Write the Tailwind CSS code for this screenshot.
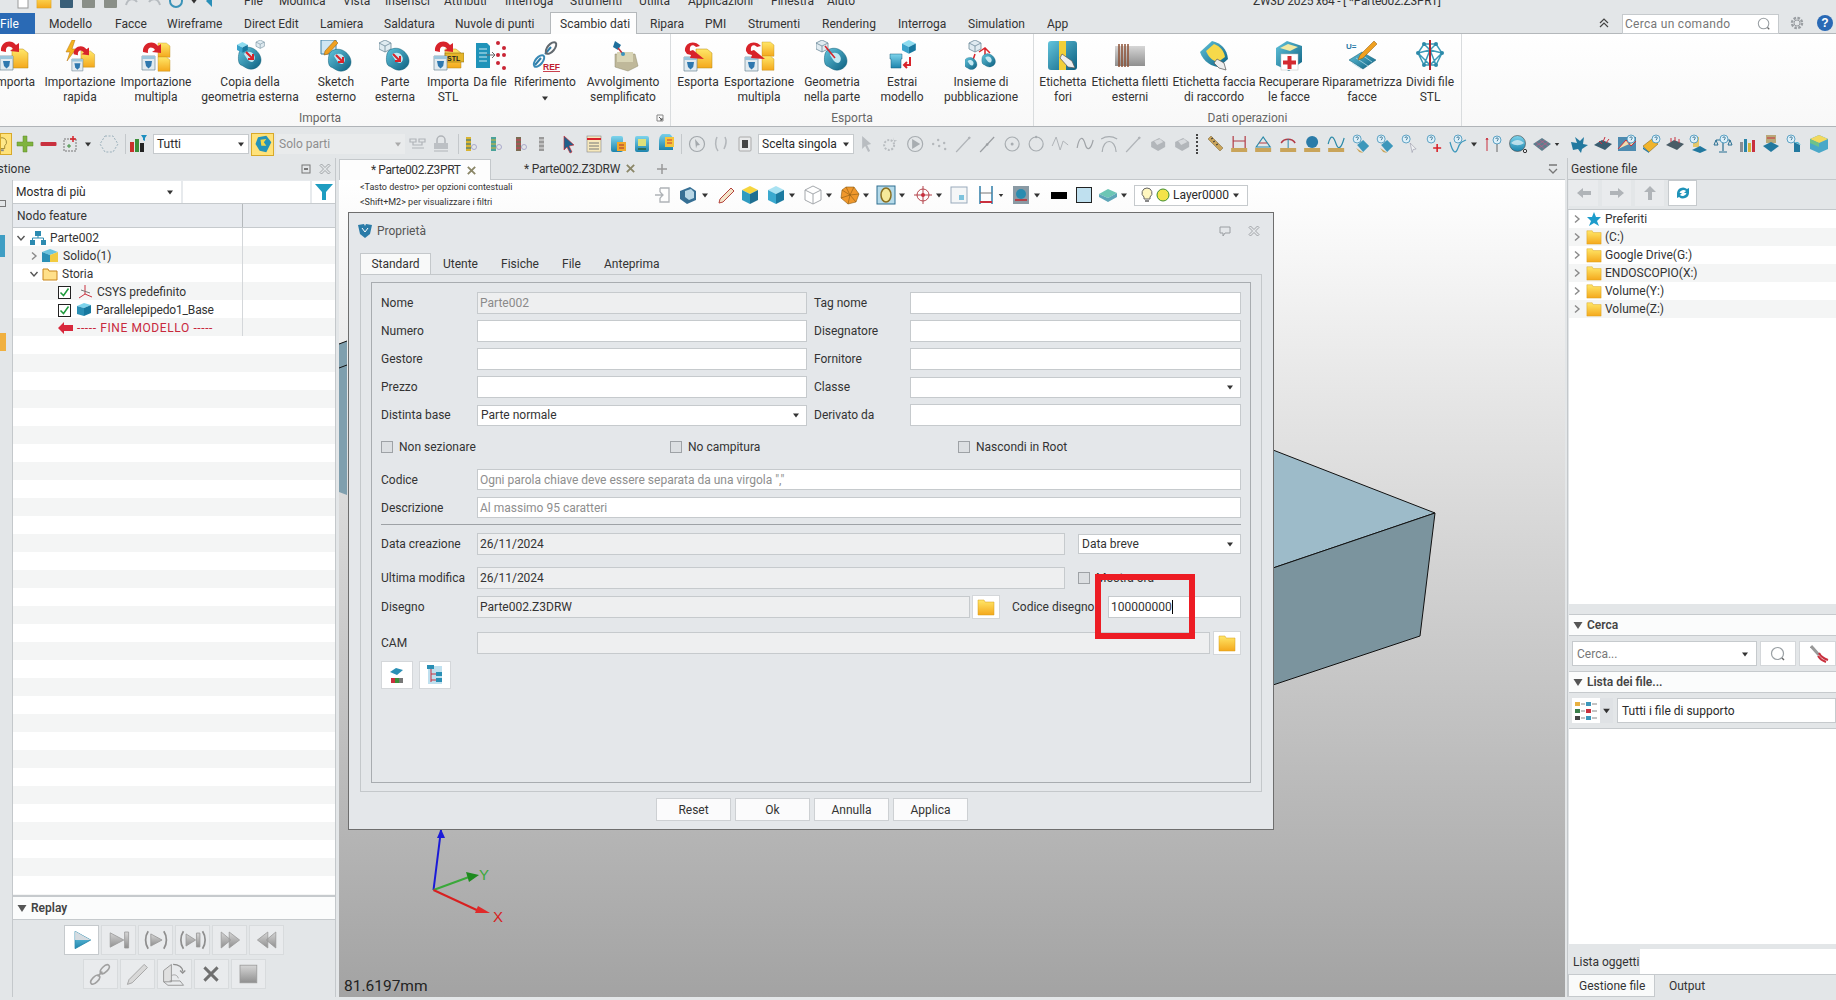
<!DOCTYPE html>
<html lang="it">
<head>
<meta charset="utf-8">
<title>ZW3D 2025 x64 - [*Parte002.Z3PRT]</title>
<script src="https://cdn.jsdelivr.net/npm/@tailwindcss/browser@4"></script>
</head>
<body class="w-[1836px] h-[1000px] overflow-hidden relative flex flex-col bg-[#e3e6e8] text-[12px] leading-none text-[#2a2a2a] font-['Roboto',sans-serif]">

<!-- icon sprites -->
<svg class="absolute w-0 h-0">
  <defs>
    <linearGradient id="gy" x1="0" y1="0" x2="0" y2="1"><stop offset="0" stop-color="#ffe768"/><stop offset="1" stop-color="#f4a81c"/></linearGradient>
    <linearGradient id="gt" x1="0" y1="0" x2="1" y2="1"><stop offset="0" stop-color="#62c4dc"/><stop offset="1" stop-color="#0c5f80"/></linearGradient>
    <linearGradient id="gb" x1="0" y1="0" x2="0" y2="1"><stop offset="0" stop-color="#7ed4ec"/><stop offset="1" stop-color="#1d84ad"/></linearGradient>
    <linearGradient id="gg" x1="0" y1="0" x2="0" y2="1"><stop offset="0" stop-color="#d6d6d6"/><stop offset="1" stop-color="#8f8f8f"/></linearGradient>
    <g id="drum"><path d="M1 0h13v14H1z" fill="#e2ebf0" stroke="#6f8797" stroke-width=".7"/><path d="M1 0h13v3H1z" fill="#9cc6dc"/><path d="M4 5h7l-.8 5-2.700 2.500L5 10z" fill="#2f78ae"/></g>
    <g id="pages"><path d="M0 0h11l5 4v15H0z" fill="url(#gy)" stroke="#b78a16" stroke-width=".5"/></g>
    <path id="redarc" d="M2 11C1 2 12-2 17 5l3-2v9l-9-1 3-2C11 5 6 6 7 12z" fill="#d8232a"/>
    <g id="blob"><path d="M7 12c1-5 8-7 13-5 5 2 9 7 9 12 0 6-6 10-12 9-4-1-5-3-8-4-3-1-3-8-2-12z" fill="url(#gt)" stroke="#0b5a75" stroke-width=".5"/><path d="M12 13c2-3 8-3 10 1 2 3 0 7-2 7-3 0-5-3-8-8z" fill="#c3e8f2"/></g>
    <path id="redtip" d="M13 12l7 7m0-5v5h-5" stroke="#d8232a" stroke-width="2" fill="none"/>
    <g id="cubeo"><path d="M6 0l6 3v6l-6 3-6-3V3z" fill="#e0ebf1" stroke="#6d8a9a" stroke-width=".8"/><path d="M0 3l6 3 6-3M6 6v6" fill="none" stroke="#6d8a9a" stroke-width=".8"/></g>
    <g id="cubes"><path d="M6 0l6 3-6 3-6-3z" fill="#8ddcf0"/><path d="M0 3l6 3v6L0 9z" fill="#3aa3cb"/><path d="M12 3L6 6v6l6-3z" fill="#17789f"/></g>
    <g id="qm"><circle cx="5" cy="5" r="4" fill="#dff1fa" stroke="#3c8fb8" stroke-width=".8"/><path d="M3.800 4c0-1.600 2.500-1.600 2.500 0 0 1-1.200 1-1.200 2.200" fill="none" stroke="#1f5f82" stroke-width=".8"/></g>

    <symbol id="r-imp" viewBox="0 0 32 32"><use href="#pages" x="14" y="9"/><use href="#drum" x="1" y="16"/><use href="#redarc" x="1" y="0"/></symbol>
    <symbol id="r-quick" viewBox="0 0 32 32"><path d="M8 0L2 12h4l-3 9 9-12H8l3-9z" fill="#f4b41f" stroke="#b2700f" stroke-width=".5"/><use href="#pages" transform="translate(17 11) scale(.85)"/><use href="#drum" transform="translate(7 19) scale(.85)"/><use href="#redarc" transform="translate(8 5) scale(.85)"/></symbol>
    <symbol id="r-multi" viewBox="0 0 32 32"><use href="#pages" transform="translate(18 3) scale(.75)"/><use href="#pages" transform="translate(18 17) scale(.75)"/><use href="#drum" x="1" y="16"/><use href="#redarc" x="1" y="1"/></symbol>
    <symbol id="r-copy" viewBox="0 0 32 32"><use href="#blob" transform="translate(-2 1)"/><use href="#redtip" transform="translate(-1 0)"/><use href="#cubeo" transform="translate(22 0) scale(.7)"/><use href="#cubes" transform="translate(3 2) scale(.9)"/></symbol>
    <symbol id="r-sketch" viewBox="0 0 32 32"><path d="M1 0h15v14H1z" fill="#cfe6f2" stroke="#3c7fa3"/><path d="M15 0l3 3-10 11-4 1 1-4z" fill="#f0a020" stroke="#8a5a10" stroke-width=".5"/><use href="#blob" transform="translate(2 3)"/><use href="#redtip" transform="translate(3 3)"/></symbol>
    <symbol id="r-ext" viewBox="0 0 32 32"><use href="#cubeo"/><use href="#blob" transform="translate(1 2)"/><use href="#redtip" transform="translate(1 2)"/></symbol>
    <symbol id="r-stl" viewBox="0 0 32 32"><use href="#pages" x="13" y="9"/><rect x="13" y="13" width="19" height="9" fill="#e5b52a" stroke="#7c6311" stroke-width=".5"/><text x="15" y="20.500" font-size="7" font-weight="700" fill="#222" font-family="Liberation Sans">STL</text><use href="#drum" x="1" y="16"/><use href="#redarc" x="1" y="0"/></symbol>
    <symbol id="r-dafile" viewBox="0 0 32 32"><path d="M2 3h11l3 3v22H2z" fill="#1f93b9"/><path d="M5 9h8M5 13h8M5 17h8M5 21h8" stroke="#cdeaf3"/><path d="M12 15h9m-3-3l3 3-3 3" stroke="#666" fill="none"/><g fill="#c92535"><circle cx="24" cy="3" r="2"/><circle cx="30" cy="8" r="2"/><circle cx="24" cy="15" r="2"/><circle cx="30" cy="15" r="2"/><circle cx="24" cy="23" r="2"/><circle cx="30" cy="28" r="2"/></g></symbol>
    <symbol id="r-ref" viewBox="0 0 32 32"><path d="M6 25l6-7M16 14l6-7" stroke="#2e7ca8" stroke-width="2"/><ellipse cx="10" cy="21" rx="7" ry="3.500" transform="rotate(-50 10 21)" fill="none" stroke="#3889b5" stroke-width="2"/><ellipse cx="22" cy="8" rx="7" ry="3.500" transform="rotate(-50 22 8)" fill="none" stroke="#62696f" stroke-width="2"/><text x="14" y="30" font-size="8.500" font-weight="700" fill="#c02030" font-family="Liberation Sans" text-decoration="underline">REF</text></symbol>
    <symbol id="r-wrap" viewBox="0 0 32 32"><path d="M8 14h20l3 12-10 5-13-4z" fill="#bfb89a" stroke="#8e8a6c" stroke-width=".5"/><path d="M10 12h16v10H10z" fill="#d9d5b6"/><path d="M8 1l6 4-3 5-5-3z" fill="#1f6f9c"/><path d="M11 8l5 6" stroke="#c5303a" stroke-width="1.500"/><circle cx="16" cy="14" r="2" fill="#3a94bd"/></symbol>
    <symbol id="r-exp" viewBox="0 0 32 32"><use href="#pages" x="14" y="9"/><use href="#drum" x="1" y="17"/><path d="M3 11C2 3 12-1 18 6l-4 1c-3-3-7-2-6 4l3-1 11 9-14-1 1-3-4-1z" fill="#d8232a"/></symbol>
    <symbol id="r-expm" viewBox="0 0 32 32"><use href="#pages" transform="translate(19 2) scale(.75)"/><use href="#pages" transform="translate(19 16) scale(.75)"/><use href="#drum" x="1" y="17"/><path d="M3 11C2 3 12-1 18 6l-4 1c-3-3-7-2-6 4l3-1 11 9-14-1 1-3-4-1z" fill="#d8232a"/></symbol>
    <symbol id="r-geom" viewBox="0 0 32 32"><use href="#cubeo"/><use href="#blob" transform="translate(2 2)"/><path d="M9 6l10 12" stroke="#d8232a" stroke-width="1.500"/></symbol>
    <symbol id="r-extract" viewBox="0 0 32 32"><use href="#cubes" transform="translate(16 0) scale(1.150)"/><path d="M4 14h12v5h-1v9H5v-9H4z" fill="url(#gb)" stroke="#145f7f" stroke-width=".5"/><path d="M24 17v8H18m3-3l-3 3 3 3" fill="none" stroke="#d8232a" stroke-width="2"/></symbol>
    <symbol id="r-pub" viewBox="0 0 32 32"><use href="#cubeo" transform="translate(4 0)"/><path d="M14 12l6-4 5 5M20 8v8M10 14l-2 6M22 14l3 4" fill="none" stroke="#d8232a" stroke-width="1.500"/><use href="#blob" transform="translate(-4 14) scale(.55)"/><use href="#blob" transform="translate(13 10) scale(.6)"/></symbol>
    <symbol id="r-holes" viewBox="0 0 32 32"><rect x="1" y="1" width="29" height="29" rx="3" fill="url(#gt)"/><rect x="12" y="1" width="7" height="29" fill="#f2cf38"/><path d="M15 14l10 7 3 7-7-1-8-9z" fill="#eee" stroke="#555" stroke-width=".7"/></symbol>
    <symbol id="r-thread" viewBox="0 0 32 32"><rect x="1" y="6" width="30" height="20" fill="url(#gg)"/><path d="M5 4v23M8 4v23M11 4v23M14 4v23" stroke="#8c4f33" stroke-width="1.500"/></symbol>
    <symbol id="r-fillet" viewBox="0 0 32 32"><path d="M2 12L14 1c9 2 15 8 16 18l-9 8C15 27 5 22 2 12z" fill="url(#gt)"/><path d="M8 11l8-7c6 2 10 7 11 13l-7 5C14 21 10 16 8 11z" fill="#f6d94a"/><path d="M19 19l7 4 2 7-7-2-5-5z" fill="#eee" stroke="#555" stroke-width=".7"/></symbol>
    <symbol id="r-recover" viewBox="0 0 32 32"><path d="M3 8l11-7 15 5v16l-13 9-13-6z" fill="url(#gt)"/><path d="M7 8l8-4 10 3-8 4z" fill="#f2e9a4"/><rect x="8" y="14" width="17" height="16" fill="#fff" stroke="#bbb" stroke-width=".5"/><path d="M14.500 16h4v4.500h4.500v4h-4.500V29h-4v-4.500H10v-4h4.500z" fill="#d32a30"/></symbol>
    <symbol id="r-repar" viewBox="0 0 32 32"><path d="M3 20l13-8 14 8-13 9z" fill="url(#gt)" stroke="#0b5a75" stroke-width=".5"/><path d="M6 23l9 6M10 18l12 8M16 15l10 7" stroke="#bfe3ee" stroke-width=".7"/><path d="M28 1l3 3-14 14-5 2 2-5z" fill="#f0a020" stroke="#8a5a10" stroke-width=".5"/><text x="0" y="9" font-size="8" font-weight="700" fill="#2a7ba8" font-family="Liberation Sans">U=</text></symbol>
    <symbol id="r-split" viewBox="0 0 32 32"><g stroke="#3a9ab8" stroke-width="1.500" fill="none"><path d="M4 13L10 4l12 0 6 9-6 12H10zM4 13l12-3 12 3M10 4l6 6 6-6M10 25l6-15 6 15M4 13l12 12 12-12"/></g><g fill="#2d89a9"><circle cx="4" cy="13" r="2"/><circle cx="28" cy="13" r="2"/><circle cx="10" cy="4" r="2"/><circle cx="22" cy="4" r="2"/><circle cx="10" cy="25" r="2"/><circle cx="22" cy="25" r="2"/></g><path d="M16 0v30" stroke="#b3232e" stroke-width="2"/></symbol>

    <symbol id="caret" viewBox="0 0 8 8"><path d="M1 2.500h6L4 6.500z" fill="#333"/></symbol>
    <symbol id="caretg" viewBox="0 0 8 8"><path d="M1 2.500h6L4 6.500z" fill="#aaa"/></symbol>
    <symbol id="chev" viewBox="0 0 10 10"><path d="M3 1.500L7 5 3 8.500" fill="none" stroke="#8a8a8a" stroke-width="1.400"/></symbol>
    <symbol id="chevd" viewBox="0 0 10 10"><path d="M1.500 3L5 7l3.500-4" fill="none" stroke="#555" stroke-width="1.400"/></symbol>
    <symbol id="tri" viewBox="0 0 10 10"><path d="M.5 2h9L5 9z" fill="#555"/></symbol>
    <symbol id="folder" viewBox="0 0 18 18"><path d="M1 2h6l1 2h9v13H1z" fill="url(#gy)" stroke="#d79c1c" stroke-width=".5"/></symbol>
    <symbol id="search" viewBox="0 0 16 16"><circle cx="7.500" cy="7.500" r="6" fill="none" stroke="#9aa0a4" stroke-width="1.200"/><path d="M12 12l2 2" stroke="#666" stroke-width="1.500"/></symbol>
    <symbol id="xthin" viewBox="0 0 12 12"><path d="M1 2.500L2.500 1 6 4.500 9.500 1 11 2.500 7.500 6 11 9.500 9.500 11 6 7.500 2.500 11 1 9.500 4.500 6z" fill="none" stroke="#8e9296" stroke-width=".8"/></symbol>
    <symbol id="x" viewBox="0 0 12 12"><path d="M2 2l8 8M10 2l-8 8" stroke="#8b8768" stroke-width="2"/></symbol>

    <symbol id="t-bulb" viewBox="0 0 20 20"><path d="M10 3a5 5 0 013 9v3H7v-3a5 5 0 013-9z" fill="#ffe98a" stroke="#9a8430"/><path d="M8 16h4v2H8z" fill="#888"/></symbol>
    <symbol id="t-plus" viewBox="0 0 20 20"><path d="M8 2h4v6h6v4h-6v6H8v-6H2V8h6z" fill="#7fb33e" stroke="#5e8a2a" stroke-width=".5"/></symbol>
    <symbol id="t-minus" viewBox="0 0 20 20"><rect x="2" y="8" width="16" height="4" rx="1" fill="#c9303e"/></symbol>
    <symbol id="t-star" viewBox="0 0 20 20"><rect x="3" y="5" width="12" height="12" fill="none" stroke="#777" stroke-dasharray="2 1"/><path d="M12 2v6M9 5h6" stroke="#d8232a" stroke-width="1.500"/><path d="M8 10v4M6 12h4" stroke="#3a8f3a"/></symbol>
    <symbol id="t-hex" viewBox="0 0 20 20"><path d="M6 2h8l5 8-5 8H6l-5-8z" fill="none" stroke="#9bb0bb" stroke-dasharray="2 1.500"/></symbol>
    <symbol id="t-chart" viewBox="0 0 20 20"><rect x="2" y="8" width="4" height="10" fill="#c9302c"/><rect x="7" y="5" width="4" height="13" fill="#3c8f3a"/><rect x="12" y="9" width="4" height="9" fill="#222"/><path d="M13 1h6l-2 3v3l-2-1V4z" fill="#1d8fc0"/></symbol>
    <symbol id="t-sel" viewBox="0 0 24 24"><path d="M6 4l10-2 6 8-6 12-8-2-5-8z" fill="#2593b8"/><path d="M9 7l7-1-3 4 3 4-6 0z" fill="#f1d74a"/></symbol>
    <symbol id="t-g1" viewBox="0 0 20 20"><path d="M2 5h6v3H2zM11 5h6v3h-6zM5 8v3h9V8M4 14h12" fill="none" stroke="#b0b4b8" stroke-width="1.200"/></symbol>
    <symbol id="t-g2" viewBox="0 0 20 20"><path d="M6 9V6a4 4 0 018 0v3" fill="none" stroke="#b0b4b8" stroke-width="1.500"/><rect x="3" y="9" width="14" height="6" fill="#bcc0c4"/><path d="M3 17h14" stroke="#b0b4b8"/></symbol>
    <symbol id="t-bars1" viewBox="0 0 20 20"><path d="M5 3h5v14H5z" fill="#d9b431"/><path d="M5 6h5M5 10h5M5 14h5" stroke="#226f8f"/><circle cx="13" cy="13" r="2.500" fill="none" stroke="#aac"/></symbol>
    <symbol id="t-bars2" viewBox="0 0 20 20"><path d="M5 3h5v14H5z" fill="#4aa39a"/><path d="M5 6h5M5 10h5M5 14h5" stroke="#d4b53a"/><circle cx="13" cy="13" r="2.500" fill="none" stroke="#aac"/></symbol>
    <symbol id="t-bars3" viewBox="0 0 20 20"><path d="M5 3h5v14H5z" fill="#7a6b52"/><path d="M5 6h5M5 10h5M5 14h5" stroke="#d43a5a"/><circle cx="13" cy="13" r="2.500" fill="none" stroke="#aac"/></symbol>
    <symbol id="t-bars4" viewBox="0 0 20 20"><path d="M5 3h5v14H5z" fill="#9a9a9a"/><path d="M5 6h5M5 10h5M5 14h5" stroke="#e4e4e4"/></symbol>
    <symbol id="t-curs" viewBox="0 0 20 20"><path d="M5 2l10 9-5 1 3 6-2 1-3-6-3 3z" fill="#20618c" stroke="#d8232a" stroke-width=".6"/></symbol>
    <symbol id="t-list" viewBox="0 0 20 20"><rect x="3" y="2" width="14" height="16" fill="#f6e8bc" stroke="#888" stroke-width=".6"/><path d="M3 5h14" stroke="#d8232a" stroke-width="2"/><path d="M5 9h10M5 12h10M5 15h10" stroke="#777"/></symbol>
    <symbol id="t-doc" viewBox="0 0 20 20"><rect x="3" y="2" width="12" height="16" rx="2" fill="url(#gb)"/><rect x="9" y="8" width="9" height="9" fill="#f0a82c"/><path d="M11 11h5M11 14h5" stroke="#a33"/></symbol>
    <symbol id="t-doc2" viewBox="0 0 20 20"><rect x="3" y="2" width="14" height="16" rx="2" fill="url(#gb)"/><rect x="6" y="5" width="8" height="7" fill="#dfe07a"/><path d="M6 15h8" stroke="#2d6d57" stroke-width="2"/></symbol>
    <symbol id="t-doc3" viewBox="0 0 20 20"><path d="M3 6a7 7 0 0114 0v10H3z" fill="url(#gb)"/><rect x="9" y="3" width="9" height="10" fill="#f4c53c"/><path d="M11 6h5M11 9h5" stroke="#c33"/></symbol>
    <symbol id="t-circa" viewBox="0 0 20 20"><circle cx="10" cy="10" r="7.500" fill="none" stroke="#a3a8ac" stroke-width="1.200"/><path d="M8 5l5 6-3 .5-1 3z" fill="#a3a8ac"/></symbol>
    <symbol id="t-branch" viewBox="0 0 20 20"><path d="M6 3c-2 4-2 10 1 14M14 3c2 4 1 8-1 12" fill="none" stroke="#b3b7bb" stroke-width="1.500"/></symbol>
    <symbol id="t-stop" viewBox="0 0 20 20"><rect x="4" y="3" width="12" height="14" rx="1" fill="#e9eaeb" stroke="#aaa"/><rect x="7" y="6" width="6" height="8" fill="#444"/></symbol>
    <symbol id="t-arr" viewBox="0 0 20 20"><path d="M6 2l9 8-4 1 3 6-2 1-3-6-3 3z" fill="#b9bdc1"/></symbol>
    <symbol id="t-rad" viewBox="0 0 20 20"><circle cx="9" cy="11" r="5" fill="none" stroke="#b9bdc1" stroke-width="2" stroke-dasharray="2 1.500"/><path d="M13 3l1 3 3 .5-3 1.500" fill="#b9bdc1"/></symbol>
    <symbol id="t-play" viewBox="0 0 20 20"><circle cx="10" cy="10" r="7.500" fill="none" stroke="#a8adb1" stroke-width="1.200"/><path d="M7 5l8 5-8 5z" fill="#a8adb1"/></symbol>
    <symbol id="t-dots" viewBox="0 0 20 20"><g fill="#b4b8bc"><circle cx="4" cy="10" r="1.200"/><circle cx="9" cy="6" r="1.200"/><circle cx="10" cy="12" r="1.200"/><circle cx="15" cy="9" r="1.200"/><circle cx="16" cy="15" r="1.200"/></g></symbol>
    <symbol id="t-line" viewBox="0 0 20 20"><path d="M3 18L17 3" stroke="#b0b4b8" stroke-width="1.200"/><circle cx="16" cy="4" r="1.300" fill="#b0b4b8"/></symbol>
    <symbol id="t-line2" viewBox="0 0 20 20"><path d="M3 18L17 3" stroke="#9a9ea2" stroke-width="1.200"/><circle cx="10" cy="10.500" r="1.300" fill="#9a9ea2"/></symbol>
    <symbol id="t-circd" viewBox="0 0 20 20"><circle cx="10" cy="10" r="7" fill="none" stroke="#a8adb1" stroke-width="1.200"/><circle cx="10" cy="10" r="1.500" fill="#a8adb1"/></symbol>
    <symbol id="t-circ" viewBox="0 0 20 20"><circle cx="10" cy="10" r="7" fill="none" stroke="#a8adb1" stroke-width="1.200"/><circle cx="10" cy="3" r="1.200" fill="#a8adb1"/></symbol>
    <symbol id="t-sp1" viewBox="0 0 20 20"><path d="M2 12L6 3l4 13 3-9 5 4" fill="none" stroke="#b0b4b8"/></symbol>
    <symbol id="t-sp2" viewBox="0 0 20 20"><path d="M2 14C4 2 8 2 10 10s6 5 8-4" fill="none" stroke="#a0a4a8" stroke-width="1.200"/></symbol>
    <symbol id="t-arch" viewBox="0 0 20 20"><path d="M3 18C4 4 16 4 17 18M2 5c5-3 11-3 16 0" fill="none" stroke="#a8adb1" stroke-width="1.200"/></symbol>
    <symbol id="t-blk1" viewBox="0 0 20 20"><path d="M3 8l8-4 6 4v5l-7 4-7-4z" fill="#b2b6ba"/><path d="M6 7l6-2 3 3-6 3z" fill="#d7dadd"/></symbol>
    <symbol id="t-ruler" viewBox="0 0 20 20"><path d="M3 5l3-3 12 12-3 3z" fill="#c9a45a" stroke="#7a6131" stroke-width=".5"/><path d="M6 5l2-1M8 8l2-1M11 11l2-1" stroke="#333"/></symbol>
    <symbol id="t-m1" viewBox="0 0 20 20"><path d="M4 2v12M16 2v12M4 7h12" fill="none" stroke="#b23a45" stroke-width="1.200"/><rect x="2" y="14" width="16" height="4" fill="#c9a45a"/></symbol>
    <symbol id="t-m2" viewBox="0 0 20 20"><path d="M3 13L10 3l7 10z" fill="none" stroke="#2d8aa8" stroke-width="1.200"/><path d="M6 9h8" stroke="#b23a45"/><rect x="2" y="14" width="16" height="4" fill="#c9a45a"/></symbol>
    <symbol id="t-m3" viewBox="0 0 20 20"><path d="M3 9c3-5 11-5 14 0" fill="none" stroke="#b23a45" stroke-width="1.500"/><path d="M10 5v9" stroke="#2d8aa8"/><rect x="2" y="14" width="16" height="4" fill="#c9a45a"/></symbol>
    <symbol id="t-m4" viewBox="0 0 20 20"><circle cx="10" cy="8" r="6" fill="#2a7ba8"/><rect x="2" y="14" width="16" height="4" fill="#c9a45a"/></symbol>
    <symbol id="t-m5" viewBox="0 0 20 20"><path d="M2 10c3-12 6-6 8 0s5 5 8-6" fill="none" stroke="#2d8aa8" stroke-width="1.200"/><rect x="2" y="14" width="16" height="4" fill="#c9a45a"/></symbol>
    <symbol id="t-q1" viewBox="0 0 20 20"><path d="M6 11l6-5 6 6-6 6z" fill="#3c97bb"/><path d="M5 14l6 4 1 1-4-1z" fill="#c9a45a"/><use href="#qm" x="1" y="0"/></symbol>
    <symbol id="t-q3" viewBox="0 0 20 20"><path d="M11 9l6 6-3 .5-1 3z" fill="#eef0f2" stroke="#99a" stroke-width=".6"/><use href="#qm" x="2" y="0"/></symbol>
    <symbol id="t-q4" viewBox="0 0 20 20"><path d="M13 10v8M9 14h8" stroke="#d8232a" stroke-width="1.600"/><use href="#qm" x="2" y="0"/></symbol>
    <symbol id="t-q5" viewBox="0 0 20 20"><path d="M2 8c3 12 6 12 8 6s4-6 8-8" fill="none" stroke="#3c97bb" stroke-width="1.200"/><use href="#qm" x="5" y="0"/></symbol>
    <symbol id="t-q6" viewBox="0 0 20 20"><path d="M3 4v13M3 4l-1 2M3 4l1 2" stroke="#c9303e" fill="none"/><path d="M13 10v8" stroke="#666"/><use href="#qm" x="8" y="1"/></symbol>
    <symbol id="t-globe" viewBox="0 0 20 20"><circle cx="9.500" cy="9.500" r="8" fill="url(#gb)" stroke="#444" stroke-width=".6"/><path d="M3 9c4-4 9-4 13 0-4 3-9 3-13 0z" fill="#e8f4f8" opacity=".7"/><circle cx="17" cy="17" r="1.700" fill="none" stroke="#333"/></symbol>
    <symbol id="t-mesh" viewBox="0 0 20 20"><path d="M1 10l9-6 9 6-9 7z" fill="#5e7d8c"/><path d="M4 12l9-6M7 14l9-6M4 8l9 7M8 6l8 6" stroke="#d58" stroke-width=".5"/></symbol>
    <symbol id="t-s1" viewBox="0 0 20 20"><path d="M2 8l6 1-2-6 5 4 4-4-1 7 5 1-6 4-1 4-3-4-5 1z" fill="#22799f"/></symbol>
    <symbol id="t-s2" viewBox="0 0 20 20"><path d="M1 11l8-5 10 4-7 6z" fill="#3b5d70"/><path d="M12 3l-2 5M16 5l-3 4M6 7l3 3" stroke="#c9303e"/></symbol>
    <symbol id="t-s3" viewBox="0 0 20 20"><rect x="1" y="3" width="18" height="14" fill="#4d8bb0"/><path d="M1 15l8-9 5 6 5-5" fill="#f0dcb0" stroke="#c9303e"/><use href="#qm" x="9" y="0"/></symbol>
    <symbol id="t-s4" viewBox="0 0 20 20"><path d="M2 12l9-7 6 5-9 8z" fill="#f0b42c" stroke="#7a5a10" stroke-width=".5"/><path d="M2 13l6 5 0 1-6-4z" fill="#22799f"/><use href="#qm" x="10" y="0"/></symbol>
    <symbol id="t-s5" viewBox="0 0 20 20"><path d="M1 11l8-5 10 4-7 6z" fill="#4a5c66"/><path d="M6 4v4M10 3v4M14 5v4" stroke="#c9303e"/></symbol>
    <symbol id="t-s6" viewBox="0 0 20 20"><path d="M4 3h6v10H4z" fill="#e4c76a"/><path d="M3 16l8-4 7 4-7 3z" fill="#22799f"/><use href="#qm" x="0" y="0"/></symbol>
    <symbol id="t-scale" viewBox="0 0 20 20"><path d="M10 3v14M6 18h8M3 6h14" stroke="#286f92" stroke-width="1.200"/><path d="M1 11l2-5 2 5zM15 11l2-5 2 5z" fill="none" stroke="#286f92"/><use href="#qm" x="6" y="0"/></symbol>
    <symbol id="t-bar" viewBox="0 0 20 20"><rect x="3" y="8" width="3" height="10" fill="#8a8f94"/><rect x="7" y="5" width="3" height="13" fill="#2a85a8"/><rect x="11" y="9" width="3" height="9" fill="#d4b53a"/><rect x="15" y="6" width="3" height="12" fill="#c9303e"/></symbol>
    <symbol id="t-s9" viewBox="0 0 20 20"><rect x="5" y="1" width="10" height="8" fill="#b9a97a"/><path d="M2 12l8-4 8 4-8 6z" fill="#22799f"/><path d="M6 4h8" stroke="#c9303e"/></symbol>
    <symbol id="t-home" viewBox="0 0 20 20"><path d="M9 8l6 3v7H9z" fill="#22799f"/><path d="M9 8l4 0 3 3" fill="#4bb5d4"/><use href="#qm" x="1" y="0"/></symbol>
    <symbol id="t-box" viewBox="0 0 20 20"><path d="M1 5l9-4 9 4v10l-9 4-9-4z" fill="#4aa8c8"/><path d="M1 5l9-4 9 4-9 4z" fill="#f2d95e"/><path d="M1 5l9 4v4l-9-4z" fill="#6fc28a"/></symbol>

    <symbol id="v-exit" viewBox="0 0 20 20"><path d="M6 3h9v14H6v-4M6 7V3" fill="none" stroke="#aeb2b6" stroke-width="1.300"/><path d="M1 10h8M6 7l3 3-3 3" fill="none" stroke="#aeb2b6" stroke-width="1.300"/></symbol>
    <symbol id="v-view" viewBox="0 0 20 20"><path d="M2 6l10-4 6 4v9l-9 4-7-5z" fill="#366f94"/><path d="M7 6l6-2 3 3v6l-5 2-4-3z" fill="#b8d7e6"/></symbol>
    <symbol id="v-pen" viewBox="0 0 20 20"><path d="M15 3l3 3L7 17l-4 1 1-4z" fill="#f3e3c8" stroke="#b4433c"/></symbol>
    <symbol id="v-ycube" viewBox="0 0 20 20"><path d="M10 1l8 4-8 4-8-4z" fill="#f5d53e"/><path d="M2 5l8 4v10l-8-4z" fill="#2f9bc0"/><path d="M18 5l-8 4v10l8-4z" fill="#1f6f91"/></symbol>
    <symbol id="v-bcube" viewBox="0 0 20 20"><path d="M10 1l8 4-8 4-8-4z" fill="#a9e2f2"/><path d="M2 5l8 4v10l-8-4z" fill="#3aa9cf"/><path d="M18 5l-8 4v10l8-4z" fill="#1c7ba1"/></symbol>
    <symbol id="v-wcube" viewBox="0 0 20 20"><path d="M10 1l8 4v10l-8 4-8-4V5zM2 5l8 4 8-4M10 9v10" fill="#fff" stroke="#a4a8ac"/></symbol>
    <symbol id="v-poly" viewBox="0 0 20 20"><path d="M6 2h8l5 7-3 8-8 2-7-6 1-8z" fill="#f0982c" stroke="#8a5a14" stroke-width=".6"/><path d="M10 10L6 2M10 10l4-8M10 10l9-1M10 10l6 7M10 10l-2 9M10 10l-9 3M10 10L2 5" stroke="#8a5a14" stroke-width=".6"/></symbol>
    <symbol id="v-ring" viewBox="0 0 20 20"><rect x="1" y="1" width="18" height="18" fill="#b6dbea" stroke="#2f6f90"/><ellipse cx="10" cy="10" rx="5" ry="7" fill="#f5ea9a" stroke="#8a6f20" stroke-width="1.500"/></symbol>
    <symbol id="v-target" viewBox="0 0 20 20"><circle cx="10" cy="10" r="6" fill="none" stroke="#b4434a"/><path d="M10 1v18M1 10h18" stroke="#b4434a"/><circle cx="10" cy="10" r="2" fill="#c9303e"/></symbol>
    <symbol id="v-img" viewBox="0 0 20 20"><rect x="2" y="2" width="16" height="16" fill="#f4f6f7" stroke="#9ab"/><rect x="10" y="10" width="5" height="5" fill="#7ec3dd"/></symbol>
    <symbol id="v-dim" viewBox="0 0 20 20"><path d="M4 1v18M16 1v18" stroke="#2e7ca8" stroke-width="1.500"/><path d="M4 17h12" stroke="#c9303e" stroke-width="2"/><path d="M4 8h12" stroke="#777"/></symbol>
    <symbol id="v-disp" viewBox="0 0 20 20"><rect x="2" y="1" width="16" height="18" fill="#8a9aa4"/><circle cx="10" cy="9" r="5" fill="#2a8cb0"/><path d="M4 15h12" stroke="#b4434a" stroke-width="2"/></symbol>
    <symbol id="v-layer" viewBox="0 0 20 20"><path d="M1 9l9-5 9 4-9 5z" fill="#6cc6b4"/><path d="M1 9v3l9 5 9-5V8l-9 5z" fill="#5ea6b8"/></symbol>

    <symbol id="p-play" viewBox="0 0 30 30"><path d="M7 5l18 10L7 25z" fill="url(#gb)" stroke="#2a89ad"/><path d="M7 5l18 10H7z" fill="#d5dbe0"/></symbol>
    <symbol id="p-end" viewBox="0 0 30 30"><path d="M4 6l17 9-17 9zM22 5h5v20h-5z" fill="url(#gg)" stroke="#999"/></symbol>
    <symbol id="p-c1" viewBox="0 0 30 30"><path d="M9 8l13 7-13 7z" fill="url(#gg)" stroke="#999"/><path d="M6 5c-4 6-4 14 0 20M24 5c4 6 4 14 0 20" fill="none" stroke="#8e8e8e" stroke-width="2"/></symbol>
    <symbol id="p-c2" viewBox="0 0 30 30"><path d="M7 8l11 7-11 7zM19 7h4v16h-4z" fill="url(#gg)" stroke="#999"/><path d="M4 5c-4 6-4 14 0 20M26 5c4 6 4 14 0 20" fill="none" stroke="#8e8e8e" stroke-width="2"/></symbol>
    <symbol id="p-ff" viewBox="0 0 30 30"><path d="M4 5l12 10L4 25zM14 5l13 10-13 10z" fill="url(#gg)" stroke="#999"/></symbol>
    <symbol id="p-rw" viewBox="0 0 30 30"><path d="M26 5L14 15l12 10zM16 5L3 15l13 10z" fill="url(#gg)" stroke="#999"/></symbol>
    <symbol id="p-link" viewBox="0 0 30 30"><ellipse cx="9" cy="22" rx="7" ry="3.500" transform="rotate(-45 9 22)" fill="none" stroke="#a0a0a0" stroke-width="2"/><ellipse cx="21" cy="9" rx="7" ry="3.500" transform="rotate(-45 21 9)" fill="none" stroke="#a0a0a0" stroke-width="2"/><path d="M12 18l6-6" stroke="#a0a0a0" stroke-width="2"/></symbol>
    <symbol id="p-pen" viewBox="0 0 30 30"><path d="M24 3l4 4L9 26l-6 2 2-6z" fill="#d8d8d8" stroke="#999"/></symbol>
    <symbol id="p-edit" viewBox="0 0 30 30"><path d="M3 11l9-7v20H3z" fill="#e0e0e0" stroke="#8e8e8e"/><path d="M3 24l5 4h18l-4-5H10" fill="none" stroke="#8e8e8e"/><path d="M14 4c6 0 11 3 11 8m-3-1l3 3 3-3" fill="none" stroke="#8e8e8e" stroke-width="1.500"/><path d="M12 17c3-2 7-1 8 3" fill="none" stroke="#999"/></symbol>
    <symbol id="p-x" viewBox="0 0 30 30"><path d="M6 6l18 18M24 6L6 24" stroke="#6f6f6f" stroke-width="4"/></symbol>
    <symbol id="p-stop" viewBox="0 0 30 30"><rect x="5" y="4" width="21" height="22" fill="url(#gg)" stroke="#999"/></symbol>
  </defs>
</svg>

<!-- menu bar, cropped by the top of the capture -->
<div class="h-[13px] shrink-0 overflow-hidden">
  <div class="-mt-[7px] h-[16px] flex items-center text-[#333]">
    <div class="w-[244px] shrink-0 h-[16px] flex items-center pl-[16px] gap-[6px]">
      <svg class="w-[14px] h-[16px]"><rect x="2" y="1" width="10" height="14" fill="#fff" stroke="#999"/></svg>
      <svg class="w-[16px] h-[16px]"><use href="#folder"/></svg>
      <svg class="w-[16px] h-[16px]"><rect x="2" y="1" width="13" height="14" rx="1" fill="#3a5f78"/></svg>
      <svg class="w-[16px] h-[16px]"><rect x="2" y="1" width="13" height="14" rx="1" fill="#8a8f88"/></svg>
      <svg class="w-[16px] h-[16px]"><rect x="2" y="1" width="13" height="14" rx="1" fill="#8a8f88"/></svg>
      <svg class="w-[16px] h-[16px]"><path d="M2 12c2-7 8-7 11-3" fill="none" stroke="#b7bcc0" stroke-width="2"/></svg>
      <svg class="w-[16px] h-[16px]"><path d="M14 12c-2-7-8-7-11-3" fill="none" stroke="#b7bcc0" stroke-width="2"/></svg>
      <svg class="w-[16px] h-[16px]"><circle cx="8" cy="8" r="6" fill="none" stroke="#3a93b8" stroke-width="2"/></svg>
      <svg class="w-[8px] h-[16px]"><use href="#caret"/></svg>
      <svg class="w-[10px] h-[16px]"><path d="M8 2L2 8l6 6z" fill="#2a8fb8"/></svg>
    </div>
    <span class="w-[35px]">File</span><span class="w-[64px]">Modifica</span><span class="w-[42px]">Vista</span><span class="w-[59px]">Inserisci</span><span class="w-[61px]">Attributi</span><span class="w-[65px]">Interroga</span><span class="w-[69px]">Strumenti</span><span class="w-[49px]">Utilità</span><span class="w-[83px]">Applicazioni</span><span class="w-[56px]">Finestra</span><span class="w-[426px]">Aiuto</span><span class="tracking-[-0.25px]">ZW3D 2025 x64 - [ *Parte002.Z3PRT]</span>
  </div>
</div>

<!-- ribbon tabs -->
<div class="h-[21px] shrink-0 flex items-stretch border-b border-[#b4b8bb] text-[#333] relative">
  <div class="w-[35px] shrink-0 bg-[#2a6ab5] text-white flex items-center -mb-px">File</div>
  <div class="flex items-center pl-[14px] pt-px">
    <span class="w-[66px]">Modello</span><span class="w-[52px]">Facce</span><span class="w-[77px]">Wireframe</span><span class="w-[76px]">Direct Edit</span><span class="w-[64px]">Lamiera</span><span class="w-[71px]">Saldatura</span><span class="w-[95px]">Nuvole di punti</span>
  </div>
  <div class="w-[87px] shrink-0 bg-[#fdfdfd] border border-[#b4b8bb] border-b-0 -mt-px -mb-px flex items-center pl-[9px] pt-px">Scambio dati</div>
  <div class="flex items-center pl-[13px] pt-px">
    <span class="w-[55px]">Ripara</span><span class="w-[43px]">PMI</span><span class="w-[74px]">Strumenti</span><span class="w-[76px]">Rendering</span><span class="w-[70px]">Interroga</span><span class="w-[79px]">Simulation</span><span>App</span>
  </div>
  <div class="ml-auto flex items-center">
    <svg class="w-[12px] h-[12px] mr-[12px]" viewBox="0 0 12 12"><path d="M2 6l4-4 4 4M2 10l4-4 4 4" fill="none" stroke="#444" stroke-width="1.200"/></svg>
    <div class="w-[157px] h-[20px] -mb-px bg-white border border-[#c6cacd] flex items-center justify-between pl-[2px] pr-[7px] text-[#777] tracking-[0.3px]">Cerca un comando<svg class="w-[14px] h-[14px]"><use href="#search"/></svg></div>
    <svg class="w-[18px] h-[18px] ml-[9px]" viewBox="0 0 18 18"><circle cx="9" cy="9" r="5" fill="none" stroke="#9a9ea2" stroke-width="2.500" stroke-dasharray="2.500 1.400"/><circle cx="9" cy="9" r="3" fill="none" stroke="#9a9ea2"/></svg>
    <svg class="w-[18px] h-[18px] ml-[10px] mr-[2px]" viewBox="0 0 18 18"><circle cx="9" cy="9" r="8" fill="#2969b5"/><text x="9" y="13" text-anchor="middle" font-size="12" font-weight="700" fill="#fff" font-family="Liberation Sans">?</text></svg>
  </div>
</div>

<!-- ribbon -->
<div class="h-[93px] shrink-0 flex bg-gradient-to-b from-white to-[#f8f8f8] border-b border-[#b0b4b8] text-[#333] leading-[15px]">
  <div class="w-[679px] shrink-0 -ml-[8px] flex flex-col border-r border-[#d9dcde] relative">
    <div class="flex h-[78px] pt-[6px] [&>div]:shrink-0">
      <div class="w-[44px] flex flex-col items-center"><svg class="w-[32px] h-[32px] mb-[3px] shrink-0"><use href="#r-imp"/></svg><span>Importa</span></div>
      <div class="w-[88px] flex flex-col items-center"><svg class="w-[32px] h-[32px] mb-[3px] shrink-0"><use href="#r-quick"/></svg><span>Importazione</span><span>rapida</span></div>
      <div class="w-[64px] flex flex-col items-center"><svg class="w-[32px] h-[32px] mb-[3px] shrink-0"><use href="#r-multi"/></svg><span>Importazione</span><span>multipla</span></div>
      <div class="w-[124px] flex flex-col items-center"><svg class="w-[32px] h-[32px] mb-[3px] shrink-0"><use href="#r-copy"/></svg><span>Copia della</span><span>geometria esterna</span></div>
      <div class="w-[48px] flex flex-col items-center"><svg class="w-[32px] h-[32px] mb-[3px] shrink-0"><use href="#r-sketch"/></svg><span>Sketch</span><span>esterno</span></div>
      <div class="w-[70px] flex flex-col items-center"><svg class="w-[32px] h-[32px] mb-[3px] shrink-0"><use href="#r-ext"/></svg><span>Parte</span><span>esterna</span></div>
      <div class="w-[36px] flex flex-col items-center"><svg class="w-[32px] h-[32px] mb-[3px] shrink-0"><use href="#r-stl"/></svg><span>Importa</span><span>STL</span></div>
      <div class="w-[48px] flex flex-col items-center"><svg class="w-[32px] h-[32px] mb-[3px] shrink-0"><use href="#r-dafile"/></svg><span class="whitespace-nowrap">Da file</span></div>
      <div class="w-[62px] flex flex-col items-center"><svg class="w-[32px] h-[32px] mb-[3px] shrink-0"><use href="#r-ref"/></svg><span>Riferimento</span><svg class="w-[8px] h-[8px] mt-[4px]"><use href="#caret"/></svg></div>
      <div class="w-[94px] flex flex-col items-center"><svg class="w-[32px] h-[32px] mb-[3px] shrink-0"><use href="#r-wrap"/></svg><span>Avvolgimento</span><span>semplificato</span></div>
    </div>
    <div class="text-center text-[#666] pl-[8px] pr-[30px] mt-[3px]">Importa</div>
    <svg class="absolute right-[6px] bottom-[4px] w-[8px] h-[8px]" viewBox="0 0 8 8"><path d="M1 1h6v6H1z" fill="none" stroke="#888"/><path d="M3 3l3 3m0-2v2H4" fill="none" stroke="#555"/></svg>
  </div>
  <div class="w-[363px] shrink-0 flex flex-col border-r border-[#d9dcde]">
    <div class="flex h-[78px] pt-[6px] [&>div]:shrink-0">
      <div class="w-[54px] flex flex-col items-center"><svg class="w-[32px] h-[32px] mb-[3px] shrink-0"><use href="#r-exp"/></svg><span>Esporta</span></div>
      <div class="w-[68px] flex flex-col items-center"><svg class="w-[32px] h-[32px] mb-[3px] shrink-0"><use href="#r-expm"/></svg><span>Esportazione</span><span>multipla</span></div>
      <div class="w-[78px] flex flex-col items-center"><svg class="w-[32px] h-[32px] mb-[3px] shrink-0"><use href="#r-geom"/></svg><span>Geometria</span><span>nella parte</span></div>
      <div class="w-[62px] flex flex-col items-center"><svg class="w-[32px] h-[32px] mb-[3px] shrink-0"><use href="#r-extract"/></svg><span>Estrai</span><span>modello</span></div>
      <div class="w-[96px] flex flex-col items-center"><svg class="w-[32px] h-[32px] mb-[3px] shrink-0"><use href="#r-pub"/></svg><span>Insieme di</span><span>pubblicazione</span></div>
    </div>
    <div class="text-center text-[#666] mt-[3px]">Esporta</div>
  </div>
  <div class="w-[428px] shrink-0 flex flex-col border-r border-[#d9dcde]">
    <div class="flex h-[78px] pt-[6px] [&>div]:shrink-0">
      <div class="w-[58px] flex flex-col items-center"><svg class="w-[32px] h-[32px] mb-[3px] shrink-0"><use href="#r-holes"/></svg><span>Etichetta</span><span>fori</span></div>
      <div class="w-[76px] flex flex-col items-center"><svg class="w-[32px] h-[32px] mb-[3px] shrink-0"><use href="#r-thread"/></svg><span class="whitespace-nowrap">Etichetta filetti</span><span>esterni</span></div>
      <div class="w-[92px] flex flex-col items-center"><svg class="w-[32px] h-[32px] mb-[3px] shrink-0"><use href="#r-fillet"/></svg><span class="whitespace-nowrap">Etichetta faccia</span><span>di raccordo</span></div>
      <div class="w-[58px] flex flex-col items-center"><svg class="w-[32px] h-[32px] mb-[3px] shrink-0"><use href="#r-recover"/></svg><span>Recuperare</span><span>le facce</span></div>
      <div class="w-[88px] flex flex-col items-center"><svg class="w-[32px] h-[32px] mb-[3px] shrink-0"><use href="#r-repar"/></svg><span>Riparametrizza</span><span>facce</span></div>
      <div class="w-[48px] flex flex-col items-center"><svg class="w-[32px] h-[32px] mb-[3px] shrink-0"><use href="#r-split"/></svg><span class="whitespace-nowrap">Dividi file</span><span>STL</span></div>
    </div>
    <div class="text-center text-[#666] mt-[3px]">Dati operazioni</div>
  </div>
</div>

<!-- main toolbar -->
<div class="h-[31px] pt-[3px] shrink-0 flex items-center">
  <div class="w-[12px] h-[22px] bg-[#ffe27a] border border-[#d8a92a] overflow-hidden flex items-center justify-end shrink-0"><svg class="w-[18px] h-[18px] shrink-0"><use href="#t-bulb"/></svg></div>
  <svg class="w-[22px] h-[20px] ml-[2px] shrink-0"><use href="#t-plus"/></svg>
  <svg class="w-[23px] h-[20px] ml-[1px] shrink-0"><use href="#t-minus"/></svg>
  <svg class="w-[22px] h-[20px] shrink-0"><use href="#t-star"/></svg>
  <svg class="w-[10px] h-[8px] ml-[1px] shrink-0"><use href="#caret"/></svg>
  <svg class="w-[24px] h-[20px] ml-[4px] shrink-0"><use href="#t-hex"/></svg>
  <div class="w-px h-[20px] bg-[#c4c8cb] ml-[4px] shrink-0"></div>
  <svg class="w-[24px] h-[20px] shrink-0"><use href="#t-chart"/></svg>
  <div class="w-[96px] h-[20px] ml-[3px] shrink-0 bg-white border border-[#c6cacd] flex items-center justify-between pl-[3px] pr-[3px]">Tutti<svg class="w-[8px] h-[8px]"><use href="#caret"/></svg></div>
  <div class="w-[23px] h-[23px] ml-[2px] shrink-0 bg-[#ffe27a] border border-[#d8a92a] flex items-center justify-center"><svg class="w-[20px] h-[20px]"><use href="#t-sel"/></svg></div>
  <div class="w-[129px] h-[20px] ml-[2px] shrink-0 bg-[#e9ebec] flex items-center justify-between pl-[3px] pr-[3px] text-[#8e8e8e]">Solo parti<svg class="w-[8px] h-[8px]"><use href="#caretg"/></svg></div>
  <svg class="w-[24px] h-[20px] ml-[1px] shrink-0"><use href="#t-g1"/></svg>
  <svg class="w-[22px] h-[20px] shrink-0"><use href="#t-g2"/></svg>
  <div class="w-px h-[20px] bg-[#c4c8cb] ml-[6px] shrink-0"></div>
  <svg class="w-[24px] h-[20px] shrink-0"><use href="#t-bars1"/></svg>
  <svg class="w-[24px] h-[20px] ml-[1px] shrink-0"><use href="#t-bars2"/></svg>
  <svg class="w-[24px] h-[20px] ml-[1px] shrink-0"><use href="#t-bars3"/></svg>
  <svg class="w-[22px] h-[20px] shrink-0"><use href="#t-bars4"/></svg>
  <svg class="w-[24px] h-[20px] ml-[2px] shrink-0"><use href="#t-curs"/></svg>
  <svg class="w-[24px] h-[20px] ml-[1px] shrink-0"><use href="#t-list"/></svg>
  <svg class="w-[24px] h-[20px] shrink-0"><use href="#t-doc"/></svg>
  <svg class="w-[24px] h-[20px] shrink-0"><use href="#t-doc2"/></svg>
  <svg class="w-[24px] h-[20px] shrink-0"><use href="#t-doc3"/></svg>
  <div class="w-px h-[20px] bg-[#c4c8cb] ml-[3px] shrink-0"></div>
  <svg class="w-[24px] h-[20px] ml-[3px] shrink-0"><use href="#t-circa"/></svg>
  <svg class="w-[24px] h-[20px] shrink-0"><use href="#t-branch"/></svg>
  <svg class="w-[24px] h-[20px] shrink-0"><use href="#t-stop"/></svg>
  <div class="w-[96px] h-[20px] ml-[1px] shrink-0 bg-white border border-[#c6cacd] flex items-center justify-between pl-[3px] pr-[3px] whitespace-nowrap">Scelta singola<svg class="w-[8px] h-[8px]"><use href="#caret"/></svg></div>
  <svg class="w-[24.300px] h-[20px] shrink-0"><use href="#t-arr"/></svg>
  <svg class="w-[24.300px] h-[20px] shrink-0"><use href="#t-rad"/></svg>
  <svg class="w-[24.300px] h-[20px] shrink-0"><use href="#t-play"/></svg>
  <svg class="w-[24.300px] h-[20px] shrink-0"><use href="#t-dots"/></svg>
  <svg class="w-[24.300px] h-[20px] shrink-0"><use href="#t-line"/></svg>
  <svg class="w-[24.300px] h-[20px] shrink-0"><use href="#t-line2"/></svg>
  <svg class="w-[24.300px] h-[20px] shrink-0"><use href="#t-circd"/></svg>
  <svg class="w-[24.300px] h-[20px] shrink-0"><use href="#t-circ"/></svg>
  <svg class="w-[24.300px] h-[20px] shrink-0"><use href="#t-sp1"/></svg>
  <svg class="w-[24.300px] h-[20px] shrink-0"><use href="#t-sp2"/></svg>
  <svg class="w-[24.300px] h-[20px] shrink-0"><use href="#t-arch"/></svg>
  <svg class="w-[24.300px] h-[20px] shrink-0"><use href="#t-line"/></svg>
  <svg class="w-[24.300px] h-[20px] shrink-0"><use href="#t-blk1"/></svg>
  <svg class="w-[24.300px] h-[20px] shrink-0"><use href="#t-blk1"/></svg>
  <div class="w-[2px] h-[20px] ml-[2px] mr-[5px] shrink-0 border-l-2 border-dotted border-[#444]"></div>
  <svg class="w-[24px] h-[20px] shrink-0"><use href="#t-ruler"/></svg>
  <svg class="w-[24.300px] h-[20px] shrink-0"><use href="#t-m1"/></svg>
  <svg class="w-[24.300px] h-[20px] shrink-0"><use href="#t-m2"/></svg>
  <svg class="w-[24.300px] h-[20px] shrink-0"><use href="#t-m3"/></svg>
  <svg class="w-[24.300px] h-[20px] shrink-0"><use href="#t-m4"/></svg>
  <svg class="w-[24.300px] h-[20px] shrink-0"><use href="#t-m5"/></svg>
  <svg class="w-[24.300px] h-[20px] shrink-0"><use href="#t-q1"/></svg>
  <svg class="w-[24.300px] h-[20px] shrink-0"><use href="#t-q1"/></svg>
  <svg class="w-[24.300px] h-[20px] shrink-0"><use href="#t-q3"/></svg>
  <svg class="w-[24.300px] h-[20px] shrink-0"><use href="#t-q4"/></svg>
  <svg class="w-[24px] h-[20px] shrink-0"><use href="#t-q5"/></svg>
  <svg class="w-[8px] h-[8px] shrink-0"><use href="#caret"/></svg>
  <svg class="w-[24px] h-[20px] ml-[4px] shrink-0"><use href="#t-q6"/></svg>
  <svg class="w-[24px] h-[20px] shrink-0"><use href="#t-globe"/></svg>
  <svg class="w-[24px] h-[20px] shrink-0"><use href="#t-mesh"/></svg>
  <svg class="w-[6px] h-[8px] shrink-0"><use href="#caret"/></svg>
  <svg class="w-[24px] h-[20px] ml-[7px] shrink-0"><use href="#t-s1"/></svg>
  <svg class="w-[24px] h-[20px] shrink-0"><use href="#t-s2"/></svg>
  <svg class="w-[24px] h-[20px] shrink-0"><use href="#t-s3"/></svg>
  <svg class="w-[24px] h-[20px] shrink-0"><use href="#t-s4"/></svg>
  <svg class="w-[24px] h-[20px] shrink-0"><use href="#t-s5"/></svg>
  <svg class="w-[24px] h-[20px] shrink-0"><use href="#t-s6"/></svg>
  <svg class="w-[24px] h-[20px] shrink-0"><use href="#t-scale"/></svg>
  <svg class="w-[24px] h-[20px] shrink-0"><use href="#t-bar"/></svg>
  <svg class="w-[24px] h-[20px] shrink-0"><use href="#t-s9"/></svg>
  <svg class="w-[24px] h-[20px] shrink-0"><use href="#t-home"/></svg>
  <svg class="w-[24px] h-[20px] shrink-0"><use href="#t-box"/></svg>
</div>

<!-- main area -->
<div class="flex-1 min-h-0 flex pb-[3px] relative">

  <!-- left panel -->
  <div class="w-[336px] shrink-0 flex flex-col border-r border-[#c4c8cb]">
    <div class="h-[22px] shrink-0 flex items-center overflow-hidden text-[#333]">
      <span class="-ml-[17px]">Gestione</span>
      <svg class="w-[10px] h-[10px] ml-auto" viewBox="0 0 10 10"><rect x="1" y="1" width="8" height="8" fill="none" stroke="#777"/><rect x="3" y="4" width="4" height="2" fill="#777"/></svg>
      <svg class="w-[12px] h-[12px] ml-[8px] mr-[4px]"><use href="#xthin"/></svg>
    </div>
    <div class="flex-1 min-h-0 flex">
      <div class="w-[12px] shrink-0 relative overflow-hidden">
        <div class="h-[7px] w-[6px] mt-[20px] border border-[#777] border-l-0"></div>
        <div class="h-[22px] w-[5px] mt-[28px] bg-[#3f9ec4]"></div>
        <div class="h-[18px] w-[6px] mt-[76px] bg-[#f0b040]"></div>
      </div>
      <div class="flex-1 min-w-0 flex flex-col border-l border-[#c4c8cb]">
        <!-- filter row -->
        <div class="h-[23px] shrink-0 flex items-stretch bg-[#e7eaed] gap-[2px] pt-px">
          <div class="w-[168px] bg-white flex items-center justify-between pl-[3px] pr-[7px]">Mostra di più<svg class="w-[8px] h-[8px]"><use href="#caret"/></svg></div>
          <div class="w-[127px] bg-white"></div>
          <div class="flex-1 bg-white flex items-center justify-center"><svg class="w-[18px] h-[18px]" viewBox="0 0 18 18"><path d="M0 1h18l-7 8v8H7V9z" fill="#1d9cc0"/></svg></div>
        </div>
        <!-- tree header -->
        <div class="h-[25px] shrink-0 flex bg-[#e7eaee] border-y border-[#c6cacd]">
          <div class="w-[230px] flex items-center pl-[4px] border-r border-[#b4b8bb] text-[#333]">Nodo feature</div>
          <div class="flex-1"></div>
        </div>
        <!-- tree -->
        <div class="flex-1 min-h-0 bg-[repeating-linear-gradient(to_bottom,#fff_0,#fff_18px,#f4f5f5_18px,#f4f5f5_36px)]">
          <div class="h-[108px] w-[230px] pt-px border-r border-[#d4d7da] text-[#333]">
            <div class="h-[18px] flex items-center pl-[3px]"><svg class="w-[10px] h-[10px]"><use href="#chevd"/></svg><svg class="w-[18px] h-[16px] ml-[3px]" viewBox="0 0 18 16"><path d="M6 1h6v5H6zM1 10h5v5H1zM12 10h5v5h-5z" fill="#2b8ab0"/><path d="M9 6v2M3.500 10V8h11v2" fill="none" stroke="#2b8ab0"/></svg><span class="ml-[3px]">Parte002</span></div>
            <div class="h-[18px] flex items-center pl-[16px]"><svg class="w-[10px] h-[10px]"><use href="#chev"/></svg><svg class="w-[18px] h-[16px] ml-[2px]" viewBox="0 0 18 16"><path d="M1 4l8-3 8 3-8 3z" fill="#6ac4df"/><path d="M1 4l8 3v7H1z" fill="#2a8fb5"/><path d="M17 4L9 7v7h8z" fill="#f2cb40"/></svg><span class="ml-[4px]">Solido(1)</span></div>
            <div class="h-[18px] flex items-center pl-[16px]"><svg class="w-[10px] h-[10px]"><use href="#chevd"/></svg><svg class="w-[16px] h-[16px] ml-[3px]" viewBox="0 0 16 16"><path d="M1 3h5l1 2h8v9H1z" fill="#ffe08a" stroke="#c8851a"/></svg><span class="ml-[4px]">Storia</span></div>
            <div class="h-[18px] flex items-center pl-[45px]"><span class="w-[13px] h-[13px] bg-white border border-[#222] flex items-center justify-center"><svg class="w-[11px] h-[11px]" viewBox="0 0 11 11"><path d="M1.500 5.500l3 3 5-7" fill="none" stroke="#1e9a3c" stroke-width="1.500"/></svg></span><svg class="w-[16px] h-[16px] ml-[7px]" viewBox="0 0 16 16"><path d="M7 1v9M7 10l7 3M7 10l-6 4" fill="none" stroke="#c9303e"/><path d="M3 6l9 3" stroke="#777"/></svg><span class="ml-[3px]">CSYS predefinito</span></div>
            <div class="h-[18px] flex items-center pl-[45px]"><span class="w-[13px] h-[13px] bg-white border border-[#222] flex items-center justify-center"><svg class="w-[11px] h-[11px]" viewBox="0 0 11 11"><path d="M1.500 5.500l3 3 5-7" fill="none" stroke="#1e9a3c" stroke-width="1.500"/></svg></span><svg class="w-[16px] h-[16px] ml-[5px]" viewBox="0 0 16 16"><path d="M1 4l7-3 7 2-7 3z" fill="#7ed4ec"/><path d="M1 4l7 2v8l-7-2z" fill="#2a8fb5"/><path d="M15 3L8 6v8l7-3z" fill="#17789f"/></svg><span class="ml-[4px] tracking-[-0.15px]">Parallelepipedo1_Base</span></div>
            <div class="h-[18px] flex items-center pl-[45px] text-[#c8283c] tracking-[0.6px]"><svg class="w-[15px] h-[12px] mr-[4px]" viewBox="0 0 15 12"><path d="M6 0v3h9v6H6v3L0 6z" fill="#d8283c"/></svg>----- FINE MODELLO -----</div>
          </div>
        </div>
        <!-- replay -->
        <div class="h-[102px] shrink-0 flex flex-col border-t-2 border-[#c6cacd]">
          <div class="h-[23px] shrink-0 bg-[#fbfcfc] border-b border-[#c6cacd] flex items-center pl-[4px] font-semibold text-[#444]"><svg class="w-[10px] h-[10px] mr-[4px]"><use href="#tri"/></svg>Replay</div>
          <div class="flex-1 flex flex-col items-center gap-[4px] pt-[5px]">
            <div class="flex gap-[2px]">
              <div class="w-[35px] h-[30px] bg-white border border-[#c6cacd] flex items-center justify-center"><svg class="w-[26px] h-[26px]"><use href="#p-play"/></svg></div>
              <div class="w-[35px] h-[30px] bg-[#e9ebed] border border-[#d8dbdd] flex items-center justify-center"><svg class="w-[24px] h-[24px]"><use href="#p-end"/></svg></div>
              <div class="w-[35px] h-[30px] bg-[#e9ebed] border border-[#d8dbdd] flex items-center justify-center"><svg class="w-[26px] h-[26px]"><use href="#p-c1"/></svg></div>
              <div class="w-[35px] h-[30px] bg-[#e9ebed] border border-[#d8dbdd] flex items-center justify-center"><svg class="w-[26px] h-[26px]"><use href="#p-c2"/></svg></div>
              <div class="w-[35px] h-[30px] bg-[#e9ebed] border border-[#d8dbdd] flex items-center justify-center"><svg class="w-[24px] h-[24px]"><use href="#p-ff"/></svg></div>
              <div class="w-[35px] h-[30px] bg-[#e9ebed] border border-[#d8dbdd] flex items-center justify-center"><svg class="w-[24px] h-[24px]"><use href="#p-rw"/></svg></div>
            </div>
            <div class="flex gap-[2px]">
              <div class="w-[35px] h-[30px] bg-[#e9ebed] border border-[#d8dbdd] flex items-center justify-center"><svg class="w-[24px] h-[24px]"><use href="#p-link"/></svg></div>
              <div class="w-[35px] h-[30px] bg-[#e9ebed] border border-[#d8dbdd] flex items-center justify-center"><svg class="w-[24px] h-[24px]"><use href="#p-pen"/></svg></div>
              <div class="w-[35px] h-[30px] bg-[#e9ebed] border border-[#d8dbdd] flex items-center justify-center"><svg class="w-[26px] h-[26px]"><use href="#p-edit"/></svg></div>
              <div class="w-[35px] h-[30px] bg-[#e9ebed] border border-[#d8dbdd] flex items-center justify-center"><svg class="w-[22px] h-[22px]"><use href="#p-x"/></svg></div>
              <div class="w-[35px] h-[30px] bg-[#e9ebed] border border-[#d8dbdd] flex items-center justify-center"><svg class="w-[24px] h-[24px]"><use href="#p-stop"/></svg></div>
            </div>
          </div>
        </div>
      </div>
    </div>
  </div>

  <!-- graphics area -->
  <div class="w-[1231px] shrink-0 flex flex-col pl-[3px] pr-[2px]">
    <div class="h-[22px] shrink-0 flex items-stretch text-[#333] border-b border-[#c4c8cb]">
      <div class="w-[152px] shrink-0 bg-[#fdfdfd] border border-[#c4c8cb] border-b-0 -mb-px mt-px flex items-center pl-[31px] tracking-[-0.4px]">* Parte002.Z3PRT<svg class="w-[11px] h-[11px] ml-[6px]"><use href="#x"/></svg></div>
      <div class="flex items-center pl-[33px] tracking-[-0.25px]">* Parte002.Z3DRW<svg class="w-[11px] h-[11px] ml-[5px]"><use href="#x"/></svg><svg class="w-[12px] h-[12px] ml-[20px]" viewBox="0 0 12 12"><path d="M6 1v10M1 6h10" stroke="#999" stroke-width="1.500"/></svg></div>
      <svg class="w-[12px] h-[12px] ml-auto self-center mr-[6px]" viewBox="0 0 12 12"><path d="M2 2h8M2 6l4 4 4-4" fill="none" stroke="#777" stroke-width="1.300"/></svg>
    </div>
    <div class="flex-1 min-h-0 relative bg-gradient-to-b from-white to-[#a3a3a3] overflow-hidden">
      <!-- model on the free canvas of the viewport -->
      <svg class="absolute left-0 top-0 w-[1226px] h-[817px]" viewBox="340 180 1226 817">
        <path d="M340 344l8-3v154l-8-3z" fill="#7f9fae"/>
        <path d="M340 344l8-3M340 368l8-3" stroke="#111" stroke-width="1"/>
        <path d="M1274 450l162 63-162 55z" fill="#9dbbc9" stroke="#111" stroke-width="1"/>
        <path d="M1274 568l162-55-15 123-147 49z" fill="#7b949e" stroke="#111" stroke-width="1"/>
        <path d="M434.500 890L442 830" stroke="#1a1ad8" stroke-width="2"/>
        <path d="M438 838l4-9 4 9z" fill="#1a1ad8"/>
        <path d="M434.500 890L470 877" stroke="#3aa83a" stroke-width="2"/>
        <path d="M467 872l13 3-10 7z" fill="#1e8a1e"/>
        <path d="M434.500 890L482 912" stroke="#d82020" stroke-width="2"/>
        <path d="M479 906l12 7-15 0z" fill="#e02a2a"/>
        <text x="480" y="880" font-size="15" fill="#3aa83a" font-family="Liberation Sans">Y</text>
        <text x="494" y="922" font-size="15" fill="#d82020" font-family="Liberation Sans">X</text>
      </svg>
      <!-- viewport top bar -->
      <div class="relative h-[30px] flex items-center">
        <div class="w-[313px] shrink-0 h-[30px] pl-[21px] text-[9px] flex flex-col justify-center gap-[6px] text-[#333]"><span>&lt;Tasto destro&gt; per opzioni contestuali</span><span>&lt;Shift+M2&gt; per visualizzare i filtri</span></div>
        <svg class="w-[24px] h-[20px] shrink-0"><use href="#v-exit"/></svg>
        <svg class="w-[24px] h-[20px] shrink-0"><use href="#v-view"/></svg>
        <svg class="w-[10px] h-[8px] shrink-0"><use href="#caret"/></svg>
        <svg class="w-[24px] h-[20px] ml-[4px] shrink-0"><use href="#v-pen"/></svg>
        <svg class="w-[24px] h-[20px] shrink-0"><use href="#v-ycube"/></svg>
        <svg class="w-[24px] h-[20px] ml-[2px] shrink-0"><use href="#v-bcube"/></svg>
        <svg class="w-[8px] h-[8px] shrink-0"><use href="#caret"/></svg>
        <svg class="w-[24px] h-[20px] ml-[5px] shrink-0"><use href="#v-wcube"/></svg>
        <svg class="w-[8px] h-[8px] shrink-0"><use href="#caret"/></svg>
        <svg class="w-[24px] h-[20px] ml-[5px] shrink-0"><use href="#v-poly"/></svg>
        <svg class="w-[8px] h-[8px] shrink-0"><use href="#caret"/></svg>
        <svg class="w-[24px] h-[20px] ml-[4px] shrink-0"><use href="#v-ring"/></svg>
        <svg class="w-[8px] h-[8px] shrink-0"><use href="#caret"/></svg>
        <svg class="w-[24px] h-[20px] ml-[5px] shrink-0"><use href="#v-target"/></svg>
        <svg class="w-[8px] h-[8px] shrink-0"><use href="#caret"/></svg>
        <svg class="w-[24px] h-[20px] ml-[4px] shrink-0"><use href="#v-img"/></svg>
        <svg class="w-[24px] h-[20px] ml-[3px] shrink-0"><use href="#v-dim"/></svg>
        <svg class="w-[6px] h-[8px] shrink-0"><use href="#caret"/></svg>
        <svg class="w-[24px] h-[20px] ml-[5px] shrink-0"><use href="#v-disp"/></svg>
        <svg class="w-[8px] h-[8px] shrink-0"><use href="#caret"/></svg>
        <div class="w-[16px] h-[7px] bg-black ml-[10px] shrink-0"></div>
        <div class="w-[16px] h-[16px] bg-[#bfe0ef] border border-[#222] ml-[9px] shrink-0"></div>
        <svg class="w-[24px] h-[20px] ml-[4px] shrink-0"><use href="#v-layer"/></svg>
        <svg class="w-[8px] h-[8px] shrink-0"><use href="#caret"/></svg>
        <div class="w-[114px] h-[21px] ml-[6px] shrink-0 bg-white border border-[#c6cacd] flex items-center justify-between pl-[6px] pr-[7px]">
          <span class="flex items-center gap-[3px]"><svg class="w-[12px] h-[16px]" viewBox="0 0 12 16"><path d="M6 1a5 5 0 013 9v2H3v-2a5 5 0 013-9z" fill="#fff7c0" stroke="#666"/><path d="M4 13h4v2H4z" fill="#888"/></svg><svg class="w-[14px] h-[14px]" viewBox="0 0 14 14"><circle cx="7" cy="7" r="6" fill="#f4e34a" stroke="#3f8f2f"/></svg>Layer0000</span>
          <svg class="w-[8px] h-[8px]"><use href="#caret"/></svg>
        </div>
      </div>
      <div class="absolute left-[5px] bottom-[1px] text-[15.500px] leading-[20px] text-[#222]">81.6197mm</div>
    </div>
  </div>

  <!-- right panel -->
  <div class="flex-1 min-w-0 flex flex-col border-l border-[#c4c8cb]">
    <div class="h-[22px] shrink-0 flex items-center pl-[3px] border-b border-[#c4c8cb] text-[#333]">Gestione file</div>
    <div class="h-[30px] shrink-0 flex items-start gap-[4px] pl-[1px] border-b border-[#c4c8cb]">
      <div class="w-[29px] h-[26px] bg-[#e9ebed] flex items-center justify-center"><svg class="w-[16px] h-[12px]" viewBox="0 0 16 12"><path d="M7 1v3h8v4H7v3L1 6z" fill="#b0b4b8"/></svg></div>
      <div class="w-[29px] h-[26px] bg-[#e9ebed] flex items-center justify-center"><svg class="w-[16px] h-[12px]" viewBox="0 0 16 12"><path d="M9 1v3H1v4h8v3l6-5z" fill="#b0b4b8"/></svg></div>
      <div class="w-[29px] h-[26px] bg-[#e9ebed] flex items-center justify-center"><svg class="w-[14px] h-[16px]" viewBox="0 0 14 16"><path d="M7 1l6 6H9v8H5V7H1z" fill="#b0b4b8"/></svg></div>
      <div class="w-[29px] h-[26px] bg-white border border-[#c6cacd] flex items-center justify-center"><svg class="w-[18px] h-[18px]" viewBox="0 0 18 18"><path d="M3 9a6 6 0 0110-4l2-1v5h-5l2-2a4 4 0 00-6.500 2zM15 9a6 6 0 01-10 4l-2 1V9h5l-2 2a4 4 0 006.500-2z" fill="#1f93b9"/></svg></div>
    </div>
    <div class="h-[394px] shrink-0 bg-white ml-px text-[#333]">
      <div class="h-[18px] flex items-center pl-[3px]"><svg class="w-[10px] h-[10px]"><use href="#chev"/></svg><svg class="w-[16px] h-[16px] ml-[4px]" viewBox="0 0 16 16"><path d="M8 1l2 5h5l-4 4 2 5-5-3-5 3 2-5-4-4h5z" fill="#1d9ccb"/></svg><span class="ml-[3px]">Preferiti</span></div>
      <div class="h-[18px] flex items-center pl-[3px] bg-[#f4f5f5]"><svg class="w-[10px] h-[10px]"><use href="#chev"/></svg><svg class="w-[16px] h-[16px] ml-[4px]"><use href="#folder"/></svg><span class="ml-[3px]">(C:)</span></div>
      <div class="h-[18px] flex items-center pl-[3px]"><svg class="w-[10px] h-[10px]"><use href="#chev"/></svg><svg class="w-[16px] h-[16px] ml-[4px]"><use href="#folder"/></svg><span class="ml-[3px]">Google Drive(G:)</span></div>
      <div class="h-[18px] flex items-center pl-[3px] bg-[#f4f5f5]"><svg class="w-[10px] h-[10px]"><use href="#chev"/></svg><svg class="w-[16px] h-[16px] ml-[4px]"><use href="#folder"/></svg><span class="ml-[3px]">ENDOSCOPIO(X:)</span></div>
      <div class="h-[18px] flex items-center pl-[3px]"><svg class="w-[10px] h-[10px]"><use href="#chev"/></svg><svg class="w-[16px] h-[16px] ml-[4px]"><use href="#folder"/></svg><span class="ml-[3px]">Volume(Y:)</span></div>
      <div class="h-[18px] flex items-center pl-[3px] bg-[#f4f5f5]"><svg class="w-[10px] h-[10px]"><use href="#chev"/></svg><svg class="w-[16px] h-[16px] ml-[4px]"><use href="#folder"/></svg><span class="ml-[3px]">Volume(Z:)</span></div>
    </div>
    <div class="h-[10px] shrink-0"></div>
    <div class="h-[22px] shrink-0 bg-[#fbfcfc] ml-px flex items-center pl-[4px] font-semibold text-[#444] border-y border-[#c6cacd]"><svg class="w-[10px] h-[10px] mr-[4px]"><use href="#tri"/></svg>Cerca</div>
    <div class="h-[35px] shrink-0 flex items-center pl-[4px] gap-[3px]">
      <div class="w-[194px] h-[25px] bg-white border border-[#c6cacd] flex items-center justify-between pl-[4px] pr-[7px] text-[#777]">Cerca...<svg class="w-[8px] h-[8px]"><use href="#caret"/></svg></div>
      <div class="w-[38px] h-[25px] bg-white border border-[#d4d7da] flex items-center justify-center"><svg class="w-[16px] h-[16px]"><use href="#search"/></svg></div>
      <div class="w-[38px] h-[25px] bg-white border border-[#d4d7da] flex items-center overflow-hidden pl-[10px]"><svg class="w-[20px] h-[20px] shrink-0" viewBox="0 0 20 20"><path d="M1 2l8 9" stroke="#999" stroke-width="3"/><path d="M9 9c2 4 6 6 9 7M8 12c2 3 5 5 8 6" fill="none" stroke="#c9303e" stroke-width="2"/></svg></div>
    </div>
    <div class="h-[22px] shrink-0 bg-[#fbfcfc] ml-px flex items-center pl-[4px] font-semibold text-[#444] border-y border-[#c6cacd]"><svg class="w-[10px] h-[10px] mr-[4px]"><use href="#tri"/></svg>Lista dei file...</div>
    <div class="h-[35px] shrink-0 flex items-center pl-[4px] gap-[4px]">
      <div class="w-[41px] h-[25px] bg-white flex items-center"><svg class="w-[28px] h-[22px] shrink-0" viewBox="0 0 28 22"><rect x="3" y="2" width="5" height="4" fill="#e8b040"/><rect x="3" y="9" width="5" height="4" fill="#3a7f4a"/><rect x="3" y="16" width="5" height="4" fill="#444"/><rect x="14" y="2" width="5" height="4" fill="#3c97bb"/><rect x="14" y="9" width="5" height="4" fill="#c9303e"/><rect x="14" y="16" width="5" height="4" fill="#3c97bb"/><path d="M9 4h4M9 11h4M9 18h4M20 4h5M20 11h5M20 18h5" stroke="#888"/></svg><div class="flex-1 h-full bg-[#dfe2e5] flex items-center justify-center"><svg class="w-[9px] h-[9px]"><use href="#caret"/></svg></div></div>
      <div class="flex-1 h-[25px] bg-white border border-[#c6cacd] flex items-center pl-[4px]">Tutti i file di supporto</div>
    </div>
    <div class="flex-1 min-h-0 bg-white ml-px border-t border-[#c6cacd]"></div>
    <div class="h-[5px] shrink-0"></div>
    <div class="h-[25px] shrink-0 flex items-stretch ml-px">
      <div class="w-[71px] flex items-center pl-[4px] text-[#333] whitespace-nowrap">Lista oggetti</div>
      <div class="flex-1 bg-white"></div>
    </div>
    <div class="h-[23px] shrink-0 flex items-stretch text-[#333] border-t border-[#c6cacd]">
      <div class="w-[87px] bg-[#f9fafa] border-x border-b border-[#c6cacd] flex items-center pl-[10px]">Gestione file</div>
      <div class="flex items-center pl-[14px]">Output</div>
    </div>
  </div>
</div>

<!-- Proprietà dialog, floating over the viewport -->
<div class="absolute left-[348px] top-[212px] w-[926px] h-[618px] bg-[#e4e7ea] border border-[#6e6e6e] flex flex-col pl-[11px] text-[#333]">
  <div class="h-[40px] shrink-0 flex items-center pr-[13px] pb-[4px]">
    <svg class="w-[16px] h-[16px] -ml-[3px]" viewBox="0 0 16 16"><path d="M1 2l6-1 1 2 1-2 6 1-2 9-5 4-5-4z" fill="#2a7ba8"/><path d="M5 5l3 4 3-4" stroke="#fff" fill="none"/></svg>
    <span class="ml-[4px] text-[#555]">Proprietà</span>
    <svg class="w-[12px] h-[12px] ml-auto" viewBox="0 0 12 12"><path d="M1 2h10v6H6l-2 3V8H1z" fill="none" stroke="#9a9ea2"/></svg>
    <svg class="w-[12px] h-[12px] ml-[17px]"><use href="#xthin"/></svg>
  </div>
  <!-- tabs -->
  <div class="h-[21px] shrink-0 flex items-end relative">
    <div class="w-[71px] h-[21px] bg-[#f8f9f9] border border-[#c4c8cb] border-b-0 flex items-center justify-center">Standard</div>
    <div class="h-[20px] flex items-center pl-[12px]"><span class="w-[58px]">Utente</span><span class="w-[61px]">Fisiche</span><span class="w-[42px]">File</span><span>Anteprima</span></div>
  </div>
  <!-- tab pane -->
  <div class="w-[902px] h-[518px] shrink-0 border border-[#c4c8cb] pt-[7px] pl-[10px]">
    <div class="w-[880px] h-[501px] border border-[#a8acb0] pl-[9px] pt-[9px]">
      <div class="flex items-center h-[22px]"><span class="w-[96px]">Nome</span><div class="w-[330px] h-[22px] bg-[#eeeff0] border border-[#c6cacd] flex items-center pl-[2px] text-[#8a8a8a]">Parte002</div><span class="w-[96px] ml-[7px]">Tag nome</span><div class="w-[331px] h-[22px] bg-white border border-[#c6cacd]"></div></div>
      <div class="flex items-center h-[22px] mt-[6px]"><span class="w-[96px]">Numero</span><div class="w-[330px] h-[22px] bg-white border border-[#c6cacd]"></div><span class="w-[96px] ml-[7px]">Disegnatore</span><div class="w-[331px] h-[22px] bg-white border border-[#c6cacd]"></div></div>
      <div class="flex items-center h-[22px] mt-[6px]"><span class="w-[96px]">Gestore</span><div class="w-[330px] h-[22px] bg-white border border-[#c6cacd]"></div><span class="w-[96px] ml-[7px]">Fornitore</span><div class="w-[331px] h-[22px] bg-white border border-[#c6cacd]"></div></div>
      <div class="flex items-center h-[22px] mt-[6px]"><span class="w-[96px]">Prezzo</span><div class="w-[330px] h-[22px] bg-white border border-[#c6cacd]"></div><span class="w-[96px] ml-[7px]">Classe</span><div class="w-[331px] h-[21px] bg-white border border-[#c6cacd] flex items-center justify-end pr-[6px]"><svg class="w-[8px] h-[8px]"><use href="#caret"/></svg></div></div>
      <div class="flex items-center h-[22px] mt-[6px]"><span class="w-[96px]">Distinta base</span><div class="w-[330px] h-[21px] bg-white border border-[#c6cacd] flex items-center justify-between pl-[3px] pr-[6px]">Parte normale<svg class="w-[8px] h-[8px]"><use href="#caret"/></svg></div><span class="w-[96px] ml-[7px]">Derivato da</span><div class="w-[331px] h-[22px] bg-white border border-[#c6cacd]"></div></div>
      <div class="flex items-center h-[14px] mt-[14px]">
        <span class="w-[289px] flex items-center"><span class="w-[12px] h-[12px] bg-[#dcdfe2] border border-[#9ea2a6]"></span><span class="ml-[6px]">Non sezionare</span></span>
        <span class="w-[288px] flex items-center"><span class="w-[12px] h-[12px] bg-[#dcdfe2] border border-[#9ea2a6]"></span><span class="ml-[6px]">No campitura</span></span>
        <span class="flex items-center"><span class="w-[12px] h-[12px] bg-[#dcdfe2] border border-[#9ea2a6]"></span><span class="ml-[6px]">Nascondi in Root</span></span>
      </div>
      <div class="flex items-center h-[21px] mt-[15px]"><span class="w-[96px]">Codice</span><div class="w-[764px] h-[21px] bg-white border border-[#c6cacd] flex items-center pl-[2px] text-[#8e8e8e]">Ogni parola chiave deve essere separata da una virgola ","</div></div>
      <div class="flex items-center h-[21px] mt-[7px]"><span class="w-[96px]">Descrizione</span><div class="w-[764px] h-[21px] bg-white border border-[#c6cacd] flex items-center pl-[2px] text-[#8e8e8e]">Al massimo 95 caratteri</div></div>
      <div class="w-[860px] h-px bg-[#9ea2a6] mt-[6px]"></div>
      <div class="flex items-center h-[22px] mt-[8px]"><span class="w-[96px]">Data creazione</span><div class="w-[588px] h-[22px] bg-[#eeeff0] border border-[#c6cacd] flex items-center pl-[2px]">26/11/2024</div><div class="w-[163px] h-[20px] ml-[13px] bg-white border border-[#c6cacd] flex items-center justify-between pl-[3px] pr-[6px]">Data breve<svg class="w-[8px] h-[8px]"><use href="#caret"/></svg></div></div>
      <div class="flex items-center h-[22px] mt-[12px]"><span class="w-[96px] whitespace-nowrap">Ultima modifica</span><div class="w-[588px] h-[22px] bg-[#eeeff0] border border-[#c6cacd] flex items-center pl-[2px]">26/11/2024</div><span class="w-[12px] h-[12px] ml-[13px] bg-[#dcdfe2] border border-[#9ea2a6]"></span><span class="ml-[6px]">Mostra ora</span></div>
      <div class="flex items-center h-[22px] mt-[7px]"><span class="w-[96px]">Disegno</span><div class="w-[493px] h-[22px] bg-[#eeeff0] border border-[#c6cacd] flex items-center pl-[2px]">Parte002.Z3DRW</div><div class="w-[28px] h-[24px] ml-[2px] bg-white border border-[#d4d7da] flex items-center justify-center"><svg class="w-[18px] h-[18px]"><use href="#folder"/></svg></div><span class="w-[96px] ml-[12px] whitespace-nowrap">Codice disegno</span><div class="w-[133px] h-[22px] bg-white border border-[#c6cacd] flex items-center pl-[2px]">100000000<span class="w-px h-[14px] bg-black"></span></div></div>
      <div class="flex items-center h-[22px] mt-[14px]"><span class="w-[96px]">CAM</span><div class="w-[733px] h-[22px] bg-[#eeeff0] border border-[#c6cacd]"></div><div class="w-[28px] h-[24px] ml-[3px] bg-white border border-[#d4d7da] flex items-center justify-center"><svg class="w-[18px] h-[18px]"><use href="#folder"/></svg></div></div>
      <div class="flex gap-[6px] mt-[7px]">
        <div class="w-[32px] h-[28px] bg-white border border-[#d4d7da] flex items-center justify-center"><svg class="w-[20px] h-[20px]" viewBox="0 0 20 20"><path d="M3 7l6-4 7 2-6 5z" fill="#2a8fb5"/><rect x="4" y="13" width="4" height="5" fill="#c9303e"/><rect x="8" y="13" width="4" height="5" fill="#3a8f3a"/><rect x="12" y="13" width="4" height="5" fill="#777"/></svg></div>
        <div class="w-[32px] h-[28px] bg-white border border-[#d4d7da] flex items-center justify-center"><svg class="w-[20px] h-[22px]" viewBox="0 0 20 22"><rect x="3" y="2" width="14" height="18" fill="#bfe0ef"/><rect x="2" y="1" width="7" height="4" fill="#2a8fb5"/><path d="M6 5v13M6 10h5M6 16h5" stroke="#c9303e" fill="none"/><rect x="11" y="8" width="6" height="4" fill="#2a8fb5"/><rect x="11" y="14" width="6" height="4" fill="#2a8fb5"/></svg></div>
      </div>
    </div>
  </div>
  <!-- buttons -->
  <div class="flex gap-[4px] mt-[6px] pl-[296px]">
    <div class="w-[75px] h-[23px] bg-[#fbfbfc] border border-[#cdd0d3] flex items-center justify-center">Reset</div>
    <div class="w-[75px] h-[23px] bg-[#fbfbfc] border border-[#cdd0d3] flex items-center justify-center">Ok</div>
    <div class="w-[75px] h-[23px] bg-[#fbfbfc] border border-[#cdd0d3] flex items-center justify-center">Annulla</div>
    <div class="w-[75px] h-[23px] bg-[#fbfbfc] border border-[#cdd0d3] flex items-center justify-center">Applica</div>
  </div>
</div>

<!-- red annotation box drawn on top of the screenshot -->
<div class="absolute left-[1095px] top-[574px] w-[100px] h-[65px] border-[6px] border-[#ed1c24]"></div>

</body>
</html>
